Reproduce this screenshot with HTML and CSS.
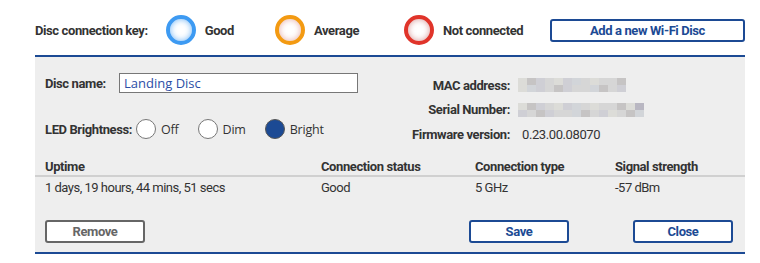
FILE: index.html
```html
<!DOCTYPE html>
<html lang="en">
<head>
    <meta charset="UTF-8">
    <meta name="viewport" content="width=device-width, initial-scale=1.0">
    <title>Wi-Fi Disc</title>
    <link rel="stylesheet" href="styles.css">
</head>
<body>

    <div class="page">
        <div class="key-bar">
            <span class="key-title">Disc connection key:</span>
            <span class="key-item"><span class="ring ring-good"></span>Good</span>
            <span class="key-item"><span class="ring ring-average"></span>Average</span>
            <span class="key-item"><span class="ring ring-bad"></span>Not connected</span>
            <button class="btn btn-add">Add a new Wi-Fi Disc</button>
        </div>

        <div class="panel">
            <div class="details">
                <div class="settings">
                    <div class="setting-row">
                        <label for="discName" class="setting-label">Disc name:</label>
                        <input type="text" id="discName" class="name-input" value="Landing Disc">
                    </div>
                    <div class="setting-row led-row">
                        <span class="setting-label">LED Brightness:</span>
                        <span class="radio-option"><span class="radio"></span>Off</span>
                        <span class="radio-option"><span class="radio"></span>Dim</span>
                        <span class="radio-option"><span class="radio radio-checked"></span>Bright</span>
                    </div>
                </div>

                <div class="info">
                    <span class="info-label">MAC address:</span>
                    <span class="info-value">
                        <span class="blurred blurred-mac">
                            <i></i><i></i><i></i><i></i><i></i><i></i><i></i><i></i><i></i><i></i><i></i><i></i>
                            <i></i><i></i><i></i><i></i><i></i><i></i><i></i><i></i><i></i><i></i><i></i><i></i>
                        </span>
                    </span>
                    <span class="info-label">Serial Number:</span>
                    <span class="info-value">
                        <span class="blurred blurred-serial">
                            <i></i><i></i><i></i><i></i><i></i><i></i><i></i><i></i><i></i><i></i><i></i><i></i><i></i><i></i>
                            <i></i><i></i><i></i><i></i><i></i><i></i><i></i><i></i><i></i><i></i><i></i><i></i><i></i><i></i>
                        </span>
                    </span>
                    <span class="info-label">Firmware version:</span>
                    <span class="info-value firmware">0.23.00.08070</span>
                </div>
            </div>

            <table class="status-table">
                <thead>
                    <tr>
                        <th class="col-uptime">Uptime</th>
                        <th class="col-status">Connection status</th>
                        <th class="col-type">Connection type</th>
                        <th>Signal strength</th>
                    </tr>
                </thead>
                <tbody>
                    <tr>
                        <td>1 days, 19 hours, 44 mins, 51 secs</td>
                        <td>Good</td>
                        <td>5 GHz</td>
                        <td>-57 dBm</td>
                    </tr>
                </tbody>
            </table>

            <div class="actions">
                <button class="btn btn-remove">Remove</button>
                <button class="btn btn-save">Save</button>
                <button class="btn btn-close">Close</button>
            </div>
        </div>
    </div>

</body>
</html>
```

FILE: styles.css
```css
body {
    margin: 0;
    background-color: white;
    font-family: Roboto, "Liberation Sans", sans-serif;
    font-size: 13px;
    color: #333;
    letter-spacing: -0.4px;
}
.page {
    width: 710px;
    padding: 15px 0 0 35px;
}
.key-bar {
    display: flex;
    align-items: center;
    height: 30px;
    margin-bottom: 10px;
    font-weight: bold;
}
.key-title {
    margin-right: 18px;
}
.key-item {
    display: flex;
    align-items: center;
    margin-right: 41px;
}
.key-item:nth-child(3) {
    margin-right: 45px;
}
.key-item:nth-child(4) {
    margin-right: 0;
}
.ring {
    width: 22px;
    height: 22px;
    border-radius: 50%;
    border: 4px solid;
    background-color: white;
    margin-right: 9px;
}
.ring-good {
    border-color: #3d9af2;
    box-shadow: inset 0 0 6px rgba(61, 154, 242, 0.7);
}
.ring-average {
    border-color: #f39a12;
    box-shadow: inset 0 0 6px rgba(214, 120, 110, 0.6);
}
.ring-bad {
    border-color: #e0342a;
    box-shadow: inset 0 0 6px rgba(190, 90, 90, 0.6);
}
.btn {
    font-family: Roboto, "Liberation Sans", sans-serif;
    font-size: 13px;
    font-weight: bold;
    letter-spacing: -0.4px;
    background-color: white;
    border: 2px solid #1c4a94;
    border-radius: 3px;
    color: #1c4a94;
    height: 23px;
    padding: 0;
    cursor: pointer;
}
.btn-add {
    margin-left: auto;
    width: 195px;
}
.panel {
    background-color: #eeeeee;
    border-top: 2px solid #1c4a94;
    border-bottom: 2px solid #1c4a94;
}
.details {
    display: flex;
    padding: 16px 0 0 10px;
    height: 84px;
}
.settings {
    width: 355px;
}
.setting-row {
    display: flex;
    align-items: center;
    height: 20px;
}
.led-row {
    margin-top: 26px;
}
.setting-label {
    font-weight: bold;
    width: 74px;
}
.led-row .setting-label {
    width: auto;
    margin-right: 4px;
}
.name-input {
    width: 239px;
    height: 20px;
    box-sizing: border-box;
    border: 1px solid #777;
    padding: 0 4px;
    font-family: "Open Sans", "DejaVu Sans", sans-serif;
    font-size: 13px;
    letter-spacing: 0;
    color: #2b4ea6;
    background-color: white;
}
.radio-option {
    display: flex;
    align-items: center;
    margin-right: 19px;
    font-family: "Open Sans", "DejaVu Sans", sans-serif;
    font-size: 12.5px;
    letter-spacing: -0.2px;
}
.radio {
    width: 18px;
    height: 18px;
    border: 1px solid #777;
    border-radius: 50%;
    background-color: white;
    margin-right: 5px;
}
.radio-checked {
    background-color: #1c4a94;
    border-color: #555;
}
.info {
    display: grid;
    grid-template-columns: 110px auto;
    grid-auto-rows: 24.5px;
    column-gap: 8px;
    align-items: center;
}
.info-label {
    font-weight: bold;
    text-align: right;
}
.info-value {
    display: flex;
    align-items: center;
}
.firmware {
    padding-left: 4px;
}
.blurred {
    display: grid;
    grid-auto-rows: 7px;
}
.blurred-mac {
    grid-template-columns: repeat(12, 9px);
}
.blurred-serial {
    grid-template-columns: repeat(14, 9px);
}
.blurred i {
    background-color: #d6d6d6;
}
.blurred i:nth-child(3n) {
    background-color: #cfcfd5;
}
.blurred i:nth-child(4n+1) {
    background-color: #dcdcd8;
}
.blurred i:nth-child(5n+2) {
    background-color: #c6c4c4;
}
.blurred i:nth-child(7n) {
    background-color: #d2d5d9;
}
.blurred-serial i:nth-child(14) {
    background-color: #b9b7c2;
}
.status-table {
    width: 100%;
    border-collapse: collapse;
}
.status-table th {
    text-align: left;
    font-weight: bold;
    height: 18px;
    padding: 0 0 0 10px;
    border-bottom: 2px solid #d0d0d0;
}
.status-table td {
    height: 20px;
    padding: 0 0 0 10px;
    letter-spacing: -0.5px;
}
.col-uptime {
    width: 266px;
}
.col-status {
    width: 144px;
}
.col-type {
    width: 130px;
}
.actions {
    display: flex;
    padding: 23px 12px 9px 10px;
}
.btn-remove {
    width: 100px;
    border-color: #666;
    color: #666;
    margin-right: auto;
}
.btn-save {
    width: 100px;
    margin-right: 64px;
}
.btn-close {
    width: 100px;
}
```
